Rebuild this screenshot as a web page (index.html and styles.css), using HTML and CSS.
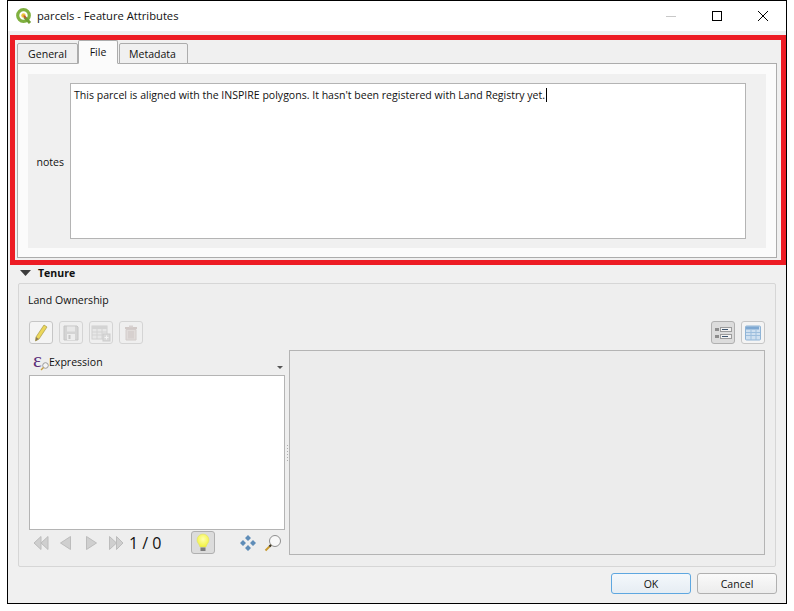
FILE: index.html
```html
<!DOCTYPE html>
<html lang="en">
<head>
<meta charset="utf-8">
<title>parcels - Feature Attributes</title>
<link rel="stylesheet" href="styles.css">
</head>
<body>
<div class="window">
  <header class="titlebar">
    <svg class="logo" width="17" height="18" viewBox="0 0 17 18"><circle cx="7.500" cy="8.500" r="5.800" fill="none" stroke="#7fb03f" stroke-width="3.200"/><circle cx="7.500" cy="8.500" r="2.200" fill="#e9c53b"/><path d="M8.500 10l5.500 6" stroke="#6e9f33" stroke-width="3"/><path d="M7.700 8.500l2.500 2.800" stroke="#d2423a" stroke-width="1.200"/></svg>
    <span class="title">parcels - Feature Attributes</span>
    <div class="winbtns">
      <svg width="46" height="30" viewBox="0 0 46 30"><path d="M18 15.500h10" stroke="#c8c8c8"/></svg>
      <svg width="46" height="30" viewBox="0 0 46 30"><rect x="18.500" y="10.500" width="9" height="9" fill="none" stroke="#000"/></svg>
      <svg width="46" height="30" viewBox="0 0 46 30"><path d="M18 10l10 10M28 10l-10 10" stroke="#000" fill="none"/></svg>
    </div>
  </header>
  <div class="content">
    <section class="annot">
      <div class="tabs">
        <div class="tab">General</div>
        <div class="tab tab-on">File</div>
        <div class="tab tab-last">Metadata</div>
      </div>
      <div class="pane">
        <div class="field">
          <label class="field-label">notes</label>
          <div class="textbox">This parcel is aligned with the INSPIRE polygons. It hasn't been registered with Land Registry yet.<span class="caret"></span></div>
        </div>
      </div>
    </section>
    <div class="tenure"><svg width="11" height="6" viewBox="0 0 11 6"><path d="M0 0h11L5.500 6z" fill="#3c3c3c"/></svg><span>Tenure</span></div>
    <section class="group">
      <div class="group-title">Land Ownership</div>
      <div class="toolbar">
        <button class="tb"><svg width="16" height="18" viewBox="0 0 16 18"><path d="M11 1l3 2-8 12-3.500 2 .5-4z" fill="#ecd75a" stroke="#a89a48" stroke-width=".7"/><path d="M2.500 17l.5-4 2.800 1.900z" fill="#8a7a5a"/></svg></button>
        <button class="tb off"><svg width="18" height="18" viewBox="0 0 18 18"><path d="M2 2h13l1 1v13H2z" fill="#c9c9c9" stroke="#b5b5b5"/><rect x="5" y="2.500" width="8" height="5" fill="#e6e6e6"/><rect x="5" y="10" width="8" height="6" fill="#ededed"/><rect x="6.500" y="11" width="2" height="4" fill="#b5b5b5"/></svg></button>
        <button class="tb off"><svg width="20" height="18" viewBox="0 0 20 18"><rect x="1" y="2" width="15" height="13" fill="#e4e4e4" stroke="#c4c4c4"/><rect x="1" y="2" width="15" height="3" fill="#c9c9c9"/><path d="M1 8h15M1 11h15M6 5v10M11 5v10" stroke="#c8c8c8"/><rect x="12" y="10" width="7" height="7" fill="#d2d2d2" stroke="#bdbdbd"/><path d="M15.500 11.500v4M13.500 13.500h4" stroke="#f5f5f5"/></svg></button>
        <button class="tb off"><svg width="16" height="18" viewBox="0 0 16 18"><path d="M2 4h12" stroke="#c5b9b7" stroke-width="2"/><rect x="6" y="1.500" width="4" height="2" fill="#cfc7c5"/><path d="M3 5.500h10V16H3z" fill="#dad3d1" stroke="#c8bebc"/><path d="M6 7v7.500M8 7v7.500M10 7v7.500" stroke="#bfb4b2"/></svg></button>
        <div class="spacer"></div>
        <button class="tb on"><svg width="18" height="14" viewBox="0 0 18 14"><rect x="1" y="2" width="4" height="3" fill="#8d8d8d"/><rect x="1" y="9" width="4" height="3" fill="#8d8d8d"/><rect x="6.500" y="1.500" width="11" height="4" fill="#f2f2f2" stroke="#9c9c9c"/><rect x="6.500" y="8.500" width="11" height="4" fill="#f2f2f2" stroke="#9c9c9c"/><path d="M8 3.500h6M8 10.500h6" stroke="#3f566e"/></svg></button>
        <button class="tb"><svg width="18" height="16" viewBox="0 0 18 16"><rect x=".5" y=".5" width="15" height="14" rx="1" transform="translate(1 .5)" fill="#cfe0f0" stroke="#8fb4d6"/><rect x="2" y="1.500" width="13" height="3" fill="#7ea8d2"/><path d="M2 7.500h14M2 10.500h14M7 5v10M12 5v10" stroke="#9dbedd"/></svg></button>
      </div>
      <div class="split">
        <div class="leftcol">
          <div class="combo">
            <span class="eps"><span class="eps-glyph">&#949;</span><svg class="eps-lens" width="9" height="9" viewBox="0 0 9 9"><circle cx="5.500" cy="3.500" r="2.800" fill="#f4f4f4" stroke="#9a9a9a"/><path d="M3.500 5.500L1 8" stroke="#c9a040" stroke-width="1.400"/></svg></span>
            <span class="combo-text">Expression</span>
            <span class="drop"></span>
          </div>
          <div class="list"></div>
          <div class="nav">
            <svg class="nav-icons" width="92" height="16" viewBox="0 0 92 16"><g fill="#cfcfcf" stroke="#bcbcbc"><path d="M8 1.500v13L1 8zM15 1.500v13L8 8z"/><path d="M37.500 1.500v13L27.500 8z"/><path d="M53.500 1.500v13L63.500 8z"/><path d="M76.500 1.500v13L83.500 8zM83.500 1.500v13L90 8z"/></g></svg>
            <span class="count">1 / 0</span>
            <button class="tb on bulb"><svg width="14" height="20" viewBox="0 0 14 20"><defs><radialGradient id="g" cx=".5" cy=".4" r=".6"><stop offset="0" stop-color="#ffffb0"/><stop offset="1" stop-color="#f2f23c"/></radialGradient></defs><path d="M7 1a6 6 0 0 1 6 6c0 3-2.500 4-3 7H4c-.5-3-3-4-3-7a6 6 0 0 1 6-6z" fill="url(#g)" stroke="#dfe06a" stroke-width=".6"/><rect x="4.500" y="14.500" width="5" height="3.500" fill="#7d7d7d"/></svg></button>
            <svg class="pan" width="16" height="16" viewBox="0 0 16 16"><g fill="#5f8db8"><path d="M8 0l3 3-3 3-3-3zM8 10l3 3-3 3-3-3zM3 5l3 3-3 3-3-3zM13 5l3 3-3 3-3-3z"/></g></svg>
            <svg class="zoomi" width="18" height="18" viewBox="0 0 18 18"><circle cx="11" cy="7" r="5.500" fill="#f8f8f8" stroke="#8f8f8f"/><path d="M7 11l-5.500 5.500" stroke="#c89a30" stroke-width="2"/><path d="M7 11l-1.500 1.500" stroke="#333" stroke-width="2"/></svg>
          </div>
        </div>
        <div class="handle"></div>
        <div class="rightpanel"></div>
      </div>
    </section>
    <footer class="buttons">
      <button class="btn btn-default">OK</button>
      <button class="btn">Cancel</button>
    </footer>
  </div>
</div>
</body>
</html>
```
FILE: styles.css
```css
* { box-sizing: border-box; }
html, body { margin: 0; padding: 0; background: #fff; }
body { font-family: "Open Sans", "Noto Sans", sans-serif; font-size: 10.55px; color: #111; padding-left: 7px; height: 611px; overflow: hidden; }
.window { width: 780px; height: 604px; border: 1px solid #000; background: #f0f0f0; display: flex; flex-direction: column; }
.titlebar { height: 30px; background: #fff; display: flex; align-items: center; padding-left: 8px; flex: none; }
.logo { margin-right: 4px; }
.title { font-size: 11.2px; padding-bottom: 1px; }
.winbtns { margin-left: auto; display: flex; }
.winbtns svg { display: block; }
.content { flex: 1; display: flex; flex-direction: column; padding: 4px 0 0 2px; }
.annot { height: 230px; border: 5px solid #ed1c24; padding: 0 4px 2px 2px; display: flex; flex-direction: column; flex: none; }
.tabs { display: flex; height: 24px; align-items: flex-end; position: relative; z-index: 1; margin-bottom: -1px; flex: none; }
.tab { height: 21px; width: 61px; border: 1px solid #acacac; border-radius: 2px 2px 0 0; background: #f0f0f0; display: flex; align-items: center; justify-content: center; }
.tab-on { height: 24px; width: 40px; background: #fbfbfb; border-bottom-color: #fbfbfb; }
.tab-last { width: 69px; margin-left: 1px; padding-right: 2px; }
.pane { flex: 1; border: 1px solid #acacac; background: #fbfbfb; padding: 10px 10px 9px; display: flex; min-height: 0; }
.field { flex: 1; background: #f0f0f0; padding: 9px 20px 9px 0; display: flex; align-items: stretch; }
.field-label { width: 36px; margin-right: 6px; padding-top: 2px; text-align: right; align-self: center; }
.textbox { flex: 1; background: #fff; border: 1px solid #b4b4b4; padding: 3px; line-height: 16px; }
.caret { display: inline-block; width: 1px; height: 14px; background: #000; vertical-align: -3px; margin-left: 1px; }
.tenure { height: 18px; display: flex; align-items: center; gap: 7px; padding: 0 0 3px 10px; flex: none; font-weight: 700; }
.group { margin-left: 8px; width: 758px; height: 284px; border: 1px solid #d6d6d6; border-radius: 2px; padding: 8px 10px 11px; display: flex; flex-direction: column; background: #eeeeee; flex: none; }
.group-title { height: 16px; line-height: 16px; margin-left: -1px; flex: none; }
.toolbar { display: flex; gap: 6px; margin-top: 13px; height: 23px; flex: none; }
.tb { width: 24px; height: 23px; padding: 0; border: 1px solid #c6c6c6; border-radius: 3px; background: #f4f4f4; display: flex; align-items: center; justify-content: center; }
.tb.off { background: #efefef; border-color: #d4d4d4; }
.tb.off svg { opacity: .7; }
.tb.on { background: #dcdcdc; border-color: #b0b0b0; }
.spacer { flex: 1; }
.split { display: flex; margin-top: 6px; flex: 1; min-height: 0; }
.leftcol { width: 256px; display: flex; flex-direction: column; flex: none; }
.combo { height: 25px; flex: none; display: flex; align-items: center; position: relative; padding: 0 0 2px 4px; }
.eps { flex: none; position: relative; width: 16px; height: 20px; }
.eps-glyph { font-family: "Liberation Serif", serif; font-size: 21px; line-height: 16px; color: #5a2d78; display: block; }
.eps-lens { position: absolute; left: 7px; top: 10px; }
.drop { position: absolute; right: 2px; top: 16px; border: 3px solid transparent; border-top: 3px solid #555; border-bottom: 0; }
.list { height: 155px; background: #fff; border: 1px solid #b4b4b4; flex: none; }
.nav { height: 25px; display: flex; align-items: center; padding-left: 4px; flex: none; }
.nav-icons { flex: none; }
.count { font-size: 16px; margin-left: 4px; width: 62px; padding-top: 1px; }
.bulb { width: 24px; height: 23px; }
.pan { margin-left: 25px; }
.zoomi { margin-left: 8px; }
.handle { width: 1px; height: 16px; margin: 0 1px 0 2px; flex: none; align-self: center; background: repeating-linear-gradient(#aeaeae 0 1px, transparent 1px 3px); }
.rightpanel { flex: 1; border: 1px solid #b4b4b4; background: #ececec; }
.buttons { display: flex; justify-content: flex-end; gap: 6px; padding: 6px 9px 0 0; flex: none; }
.btn { width: 80px; height: 21px; padding: 0; font: inherit; color: #111; border: 1px solid #b0b0b0; border-radius: 3px; background: linear-gradient(#fafafa, #ececec); }
.btn-default { border-color: #5ea7e0; background: linear-gradient(#f4f8fc, #e6edf3); }
```
